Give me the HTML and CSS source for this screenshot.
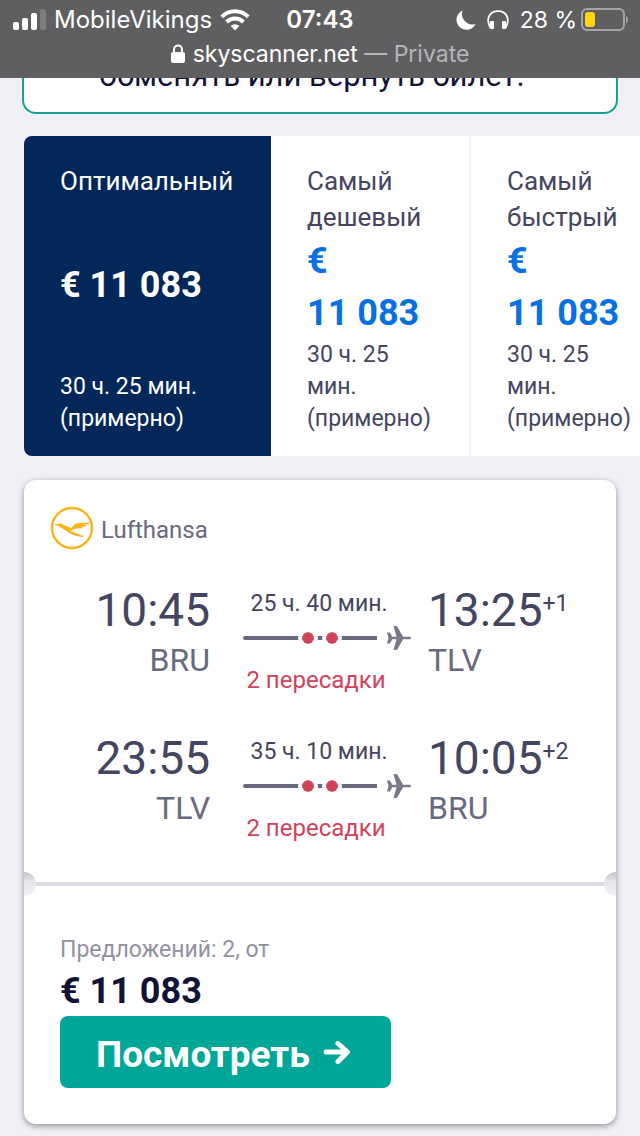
FILE: index.html
```html
<!DOCTYPE html>
<html lang="ru">

<head>
    <meta charset="UTF-8">
    <meta name="viewport" content="width=device-width, initial-scale=1.0">
    <title>Skyscanner</title>
    <link rel="stylesheet" href="styles.css">
</head>

<body>

    <header class="browser-bar">
        <div class="status">
            <div class="status-left">
                <svg class="signal" width="34" height="22" viewBox="0 0 34 22" fill="#fff">
                    <rect x="1" y="13" width="6" height="8" rx="2"/>
                    <rect x="10" y="9" width="6" height="12" rx="2"/>
                    <rect x="19" y="4" width="6" height="17" rx="2"/>
                    <rect x="28" y="0" width="6" height="21" rx="2" opacity=".2"/>
                </svg>
                <span class="carrier">MobileVikings</span>
                <svg width="30" height="22" viewBox="0 0 30 22" fill="none" stroke="#fff" stroke-width="4">
                    <path d="M1.8 7.8a18.5 18.5 0 0 1 26.4 0"/>
                    <path d="M6.6 13a12 12 0 0 1 16.8 0"/>
                    <path d="M15 21.5l-4.4-4.4a6.2 6.2 0 0 1 8.8 0z" fill="#fff" stroke="none"/>
                </svg>
            </div>
            <span class="clock">07:43</span>
            <div class="status-right">
                <svg width="20" height="20" viewBox="0 0 20 20" fill="#fff">
                    <path d="M6.6 0.6A10 10 0 1 0 19.6 14 10.4 10.4 0 0 1 6.6 .6z"/>
                </svg>
                <svg width="22" height="20" viewBox="0 0 22 20">
                    <path d="M3.5 18C-1.500 9.500 2 1.200 11 1.200S23.500 9.500 18.500 18" fill="none" stroke="#fff" stroke-width="1.800"/>
                    <rect x="3" y="11" width="4" height="8" rx="1" fill="#fff"/>
                    <rect x="15" y="11" width="4" height="8" rx="1" fill="#fff"/>
                </svg>
                <span>28 %</span>
                <svg class="battery" width="48" height="24" viewBox="0 0 48 24">
                    <rect x="2" y="1" width="42" height="21" rx="5" fill="none" stroke="#a5a5a7" stroke-width="2"/>
                    <rect x="5" y="4" width="10" height="15" rx="3" fill="#ffd60a"/>
                    <path d="M46 8c2.500 1 2.500 6.500 0 7.500z" fill="#a5a5a7"/>
                </svg>
            </div>
        </div>
        <div class="address">
            <svg width="14" height="20" viewBox="0 0 14 20">
                <path d="M3 10V5.500a4 4 0 0 1 8 0V10" fill="none" stroke="#fff" stroke-width="2"/>
                <rect x="0" y="8" width="14" height="11" rx="2" fill="#fff"/>
            </svg>
            <span>skyscanner.net <span class="private">— Private</span></span>
        </div>
    </header>

    <main>
        <p class="notice">обменять или вернуть билет.</p>

        <div class="sort">
            <button class="sort-tab active">
                <span class="sort-name">Оптимальный</span>
                <span class="price">€ 11 083</span>
                <span class="duration">30 ч. 25 мин. (примерно)</span>
            </button>
            <button class="sort-tab">
                <span class="sort-name">Самый дешевый</span>
                <span class="price">€ <br>11 083</span>
                <span class="duration">30 ч. 25 мин. (примерно)</span>
            </button>
            <button class="sort-tab">
                <span class="sort-name">Самый быстрый</span>
                <span class="price">€ <br>11 083</span>
                <span class="duration">30 ч. 25 мин. (примерно)</span>
            </button>
        </div>

        <article class="ticket">
            <div class="flights">
                <div class="airline">
                    <svg width="44" height="44" viewBox="0 0 44 44">
                        <circle cx="22" cy="22" r="20" fill="none" stroke="#f9b31b" stroke-width="2.400"/>
                        <path d="M4 18.500l6-1c2 0 3 1 5 2l6 2.600c3-2.500 4-4.600 8-5l11-.6-2 1.800-6 .5 5 .1-2 1.600-5 .3 3 .4-2 1.200-5 .2c-1.500.2-2 .6-3 1.200-1 .5-2 .8-3 .9l12 4.800 2 .2-1 1.200c-7-.6-11-2.200-15-5l-7-4.500c-2-1.200-3-2-5-2.200z" fill="#f9b31b"/>
                    </svg>
                    <span class="airline-name">Lufthansa</span>
                </div>

                <div class="leg">
                    <div class="depart">
                        <div class="time">10:45</div>
                        <div class="airport">BRU</div>
                    </div>
                    <div class="route">
                        <div class="route-time">25 ч. 40 мин.</div>
                        <div class="route-line">
                            <div class="line"><i class="stop"></i><i class="stop"></i></div>
                            <svg width="24" height="24" viewBox="0 0 24 24" fill="#7c788c">
                                <path d="M6.500 0h2.500q1 0 1.500.8l5.500 9.900H22.800a1.300 1.300 0 0 1 0 2.600H16L10.500 23.200q-.5.8-1.500.8H6.500l3-10.700H5.200L3 17.500H0L1.500 12 0 6.500H3l2.200 4.200H9.500z"/>
                            </svg>
                        </div>
                        <div class="stops">2 пересадки</div>
                    </div>
                    <div class="arrive">
                        <div class="time">13:25<span class="plus">+1</span></div>
                        <div class="airport">TLV</div>
                    </div>
                </div>

                <div class="leg">
                    <div class="depart">
                        <div class="time">23:55</div>
                        <div class="airport">TLV</div>
                    </div>
                    <div class="route">
                        <div class="route-time">35 ч. 10 мин.</div>
                        <div class="route-line">
                            <div class="line"><i class="stop"></i><i class="stop"></i></div>
                            <svg width="24" height="24" viewBox="0 0 24 24" fill="#7c788c">
                                <path d="M6.500 0h2.500q1 0 1.500.8l5.500 9.900H22.800a1.300 1.300 0 0 1 0 2.600H16L10.500 23.200q-.5.8-1.500.8H6.500l3-10.700H5.200L3 17.500H0L1.500 12 0 6.500H3l2.200 4.200H9.500z"/>
                            </svg>
                        </div>
                        <div class="stops">2 пересадки</div>
                    </div>
                    <div class="arrive">
                        <div class="time">10:05<span class="plus">+2</span></div>
                        <div class="airport">BRU</div>
                    </div>
                </div>
            </div>

            <div class="tear"></div>

            <div class="offer">
                <div class="offer-count">Предложений: 2, от</div>
                <div class="price">€ 11 083</div>
                <button class="view">
                    Посмотреть
                    <svg width="28" height="26" viewBox="0 0 28 26" fill="none" stroke="#fff" stroke-width="5" stroke-linecap="round" stroke-linejoin="round">
                        <path d="M3 10h20M15 1.500v0l9.500 8.500-9.500 9.500" transform="translate(0 1)"/>
                    </svg>
                </button>
            </div>
        </article>
    </main>

</body>

</html>
```
FILE: styles.css
```css
* {
    box-sizing: border-box;
}

body {
    margin: 0;
    background: #f0f1f6;
    color: #444560;
    font-family: Roboto, "Liberation Sans", sans-serif;
    font-size: 24px;
    line-height: 32px;
    overflow-x: hidden;
}

button {
    border: 0;
    font-family: inherit;
    text-align: left;
}

/* browser bar */
.browser-bar {
    position: fixed;
    top: 0;
    left: 0;
    right: 0;
    z-index: 1;
    height: 78px;
    padding-top: 4px;
    background: #5f5f61;
    color: #fff;
    font-family: Inter, sans-serif;
    font-size: 23px;
}
.status {
    display: grid;
    grid-template-columns: 1fr auto 1fr;
    align-items: center;
    padding: 0 12px;
}
.status-left, .status-right {
    display: flex;
    align-items: center;
    gap: 8px;
}
.status-right {
    justify-content: flex-end;
    gap: 11px;
}
.battery {
    margin-left: -8px;
}
.carrier, .clock {
    font-size: 24px;
}
.clock {
    font-weight: 600;
}
.address {
    display: flex;
    justify-content: center;
    align-items: center;
    gap: 8px;
    padding-top: 2px;
}
.private {
    color: #b5b5b8;
}

main {
    padding: 36px 24px 12px;
}

.notice {
    margin: 0 -2px 22px;
    padding: 20px 36px 18px 20px;
    border: 2px solid #1aa191;
    border-radius: 14px;
    background: #fff;
    color: #111236;
    font-size: 31px;
    line-height: 36px;
    text-align: center;
}

/* sort tabs */
.sort {
    display: flex;
    margin-right: -24px;
    overflow: hidden;
    border-radius: 8px 0 0 8px;
}
.sort-tab {
    display: flex;
    flex-direction: column;
    justify-content: space-between;
    flex: 0 0 200px;
    height: 320px;
    padding: 27px 34px 21px 36px;
    border-right: 2px solid #f0f1f6;
    background: #fff;
    color: #444560;
}
.active {
    flex-basis: 247px;
    border: 0;
    background: #042759;
    color: #fff;
}
.sort-name {
    font-size: 26px;
    line-height: 36px;
}
.price {
    color: #0770e3;
    font-size: 36px;
    font-weight: 700;
    line-height: 52px;
}
.active .price {
    color: #fff;
}
.duration {
    font-size: 23px;
    line-height: 32px;
}

/* ticket */
.ticket {
    margin-top: 24px;
    border-radius: 12px;
    background: #fff;
    box-shadow: 0 2px 6px rgba(0, 0, 0, .4);
}
.flights {
    padding: 26px 26px 28px;
}
.airline {
    display: flex;
    align-items: center;
    gap: 7px;
    color: #68697f;
}
.airline-name {
    padding-top: 4px;
}
.leg {
    display: grid;
    grid-template-columns: 160px 168px 1fr;
    column-gap: 33px;
    margin-top: 32px;
}
.leg + .leg {
    margin-top: 34px;
}
.depart {
    text-align: right;
}
.arrive {
    margin-left: -16px;
}
.time {
    display: flex;
    font-size: 46px;
    line-height: 56px;
}
.depart .time {
    justify-content: flex-end;
}
.plus {
    font-size: 23px;
    line-height: 44px;
}
.airport {
    color: #68697f;
    font-size: 32px;
    line-height: 44px;
}
.route {
    padding-top: 6px;
}
.route-time {
    width: 152px;
    font-size: 23px;
    text-align: center;
}
.stops {
    width: 146px;
    padding-top: 8px;
    color: #d1435b;
    text-align: center;
}
.route-line {
    display: flex;
    align-items: center;
    gap: 10px;
    height: 36px;
}
.line {
    display: flex;
    justify-content: center;
    flex: 1;
    height: 4px;
    padding-left: 20px;
    border-radius: 2px 0 0 2px;
    background: #68697f;
}
.stop {
    width: 20px;
    height: 20px;
    margin: -8px 2px;
    border: 4px solid #fff;
    border-radius: 50%;
    background: #d1435b;
    background-clip: padding-box;
}

.tear {
    display: flex;
    justify-content: space-between;
    align-items: center;
    height: 24px;
    background: linear-gradient(#dddde5, #dddde5) center / 100% 4px no-repeat;
}
.tear::before, .tear::after {
    content: "";
    width: 12px;
    height: 24px;
    border-radius: 0 12px 12px 0;
    background: linear-gradient(#c4c4ca, #e6e6eb 40%, #f0f1f6);
}
.tear::after {
    border-radius: 12px 0 0 12px;
}

.offer {
    padding: 36px;
}
.offer-count {
    padding-top: 2px;
    color: #9291a3;
    font-size: 23px;
}
.offer .price {
    color: #111236;
    line-height: 50px;
}
.view {
    display: flex;
    align-items: center;
    gap: 13px;
    height: 72px;
    padding: 4px 40px 0 36px;
    border-radius: 8px;
    background: #00a698;
    color: #fff;
    font-size: 37px;
    font-weight: 700;
}
```
